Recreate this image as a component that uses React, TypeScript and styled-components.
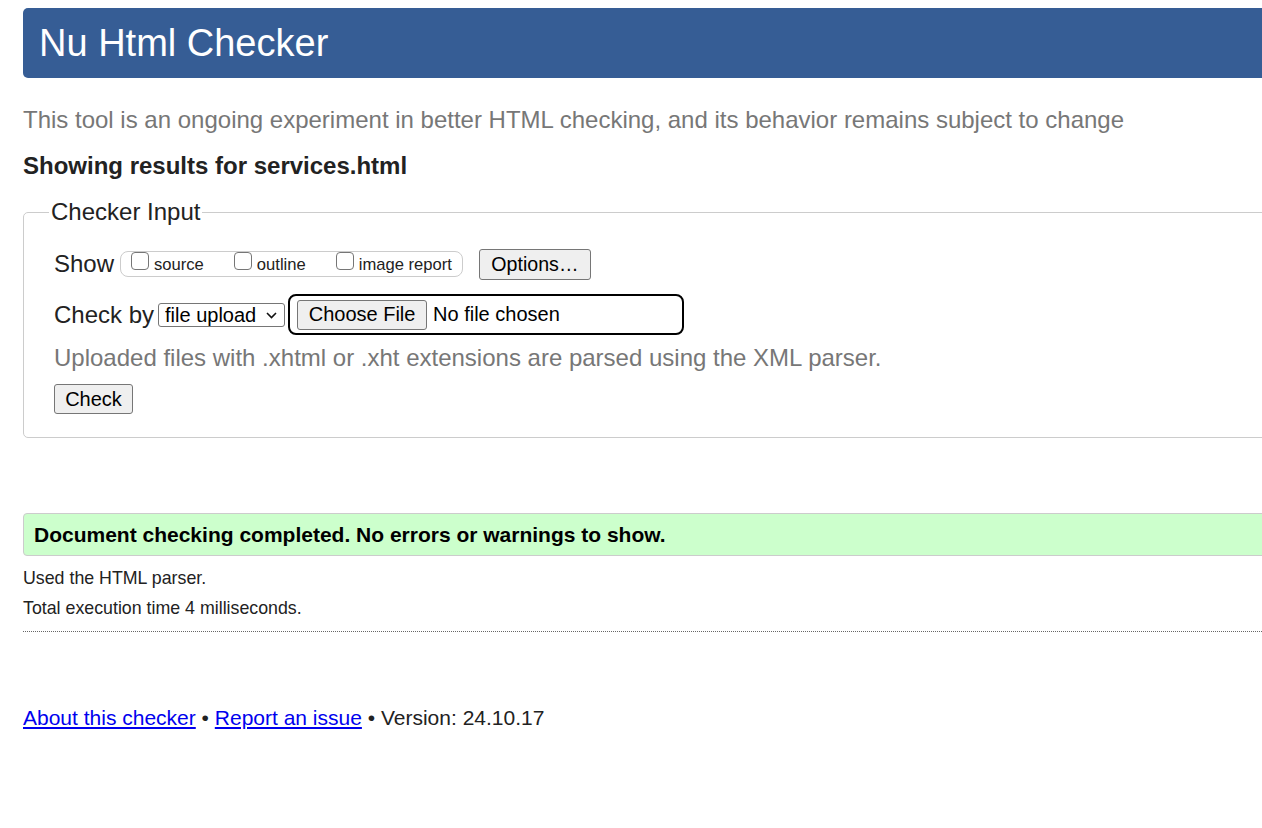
import React from 'react';
import styled, { createGlobalStyle } from 'styled-components';

const GlobalStyle = createGlobalStyle`
  html, body {
    margin: 0;
    padding: 0;
    overflow: hidden;
    background: #fff;
  }
  body {
    font-family: "Liberation Sans", Arial, sans-serif;
    color: #222;
  }
`;

const Page = styled.div`
  width: 1300px;
  padding: 8px 0 0 23px;
  box-sizing: border-box;
`;

const Header = styled.header`
  height: 70px;
  background: #365d95;
  border-radius: 5px;
  display: flex;
  align-items: center;
  padding-left: 16px;
`;

const Title = styled.h1`
  margin: 0;
  font-size: 38px;
  font-weight: normal;
  line-height: 1;
  color: #fff;
`;

const Lead = styled.p`
  margin: 28px 0 0;
  font-size: 24px;
  line-height: 28px;
  color: #777;
`;

const ResultsFor = styled.h2`
  margin: 18px 0 0;
  font-size: 24px;
  line-height: 28px;
  font-weight: bold;
  color: #222;
`;

const Fieldset = styled.fieldset`
  margin: 18px 0 0;
  padding: 0 0 23px 30px;
  border: 1px solid #ccc;
  border-radius: 5px;
  min-width: 0;
`;

const Legend = styled.legend`
  font-size: 24px;
  line-height: 28px;
  padding: 0 2px;
  margin-left: -5px;
  color: #222;
`;

const Row = styled.div<{ $top: number; $height: number }>`
  display: flex;
  align-items: center;
  margin-top: ${(p) => p.$top}px;
  height: ${(p) => p.$height}px;
`;

const RowLabel = styled.span`
  font-size: 24px;
  line-height: 28px;
  color: #222;
  margin-right: 6px;
`;

const OptionGroup = styled.div`
  display: flex;
  align-items: flex-start;
  gap: 30px;
  height: 26px;
  box-sizing: border-box;
  padding: 0 10px 0 10px;
  border: 1px solid #ccc;
  border-radius: 8px;
`;

const OptionLabel = styled.label`
  display: flex;
  align-items: flex-start;
  font-size: 16.6px;
  color: #222;
`;

const Box = styled.input`
  appearance: none;
  width: 18px;
  height: 18px;
  margin: 0 5px 0 0;
  border: 1px solid #767676;
  border-radius: 4px;
  background: #fff;
  box-sizing: border-box;
`;

const OptionText = styled.span`
  padding-top: 3px;
  line-height: 19px;
`;

const Button = styled.button<{ $w: number; $h: number }>`
  width: ${(p) => p.$w}px;
  height: ${(p) => p.$h}px;
  padding: 0;
  font-family: "Liberation Sans", Arial, sans-serif;
  font-size: 20px;
  color: #000;
  background: #efefef;
  border: 1px solid #767676;
  border-radius: 3px;
`;

const OptionsButton = styled(Button)`
  margin-left: 16px;
  font-size: 19.6px;
`;

const SelectWrap = styled.div`
  position: relative;
  margin-left: -2px;
`;

const Select = styled.select`
  appearance: none;
  width: 127px;
  height: 24px;
  box-sizing: border-box;
  padding: 0 0 0 6px;
  font-family: "Liberation Sans", Arial, sans-serif;
  font-size: 20px;
  line-height: 22px;
  color: #000;
  background: #fff;
  border: 1px solid #767676;
  border-radius: 3px;
`;

const Chevron = styled.svg`
  position: absolute;
  right: 8px;
  top: 9px;
  pointer-events: none;
`;

const FileBox = styled.div`
  display: flex;
  align-items: center;
  gap: 6px;
  width: 396px;
  height: 41px;
  box-sizing: border-box;
  margin-left: 3px;
  padding-left: 7px;
  border: 2px solid #000;
  border-radius: 8px;
`;

const FileName = styled.span`
  font-size: 20px;
  color: #000;
`;

const Hint = styled.p`
  margin: 9px 0 0;
  font-size: 24px;
  line-height: 28px;
  color: #777;
`;

const CheckButton = styled(Button)`
  display: block;
  margin-top: 12px;
`;

const Success = styled.div`
  margin-top: 75px;
  height: 43px;
  box-sizing: border-box;
  display: flex;
  align-items: center;
  padding-left: 10px;
  background: #ccffcc;
  border: 1px solid #ccc;
  border-radius: 4px;
  font-size: 21px;
  font-weight: bold;
  color: #000;
`;

const Note = styled.p<{ $top: number }>`
  margin: ${(p) => p.$top}px 0 0;
  font-size: 17.8px;
  line-height: 20px;
  color: #222;
`;

const Divider = styled.hr`
  margin: 13px 0 0;
  height: 0;
  border: 0;
  border-top: 1px dotted #666;
`;

const Footer = styled.p`
  margin: 74px 0 0;
  font-size: 21px;
  line-height: 24px;
  color: #222;

  a {
    color: #0000ee;
  }
`;

export default function App() {
  return (
    <>
      <GlobalStyle />
      <Page>
        <Header>
          <Title>Nu Html Checker</Title>
        </Header>
        <Lead>
          This tool is an ongoing experiment in better HTML checking, and its behavior remains subject to change
        </Lead>
        <ResultsFor>Showing results for services.html</ResultsFor>

        <Fieldset>
          <Legend>Checker Input</Legend>
          <Row $top={22} $height={32}>
            <RowLabel>Show</RowLabel>
            <OptionGroup>
              {['source', 'outline', 'image report'].map((name) => (
                <OptionLabel key={name}>
                  <Box type="checkbox" />
                  <OptionText>{name}</OptionText>
                </OptionLabel>
              ))}
            </OptionGroup>
            <OptionsButton $w={112} $h={31}>Options…</OptionsButton>
          </Row>
          <Row $top={14} $height={41}>
            <RowLabel>Check by</RowLabel>
            <SelectWrap>
              <Select defaultValue="file">
                <option value="file">file upload</option>
              </Select>
              <Chevron width="11" height="7" viewBox="0 0 11 7">
                <polyline points="1,1 5.5,5.5 10,1" fill="none" stroke="#111" strokeWidth="1.6" />
              </Chevron>
            </SelectWrap>
            <FileBox>
              <Button $w={130} $h={30}>Choose File</Button>
              <FileName>No file chosen</FileName>
            </FileBox>
          </Row>
          <Hint>Uploaded files with .xhtml or .xht extensions are parsed using the XML parser.</Hint>
          <CheckButton $w={79} $h={30}>Check</CheckButton>
        </Fieldset>

        <Success>Document checking completed. No errors or warnings to show.</Success>
        <Note $top={12}>Used the HTML parser.</Note>
        <Note $top={10}>Total execution time 4 milliseconds.</Note>
        <Divider />

        <Footer>
          <a href="#about">About this checker</a> • <a href="#issue">Report an issue</a> • Version: 24.10.17
        </Footer>
      </Page>
    </>
  );
}
